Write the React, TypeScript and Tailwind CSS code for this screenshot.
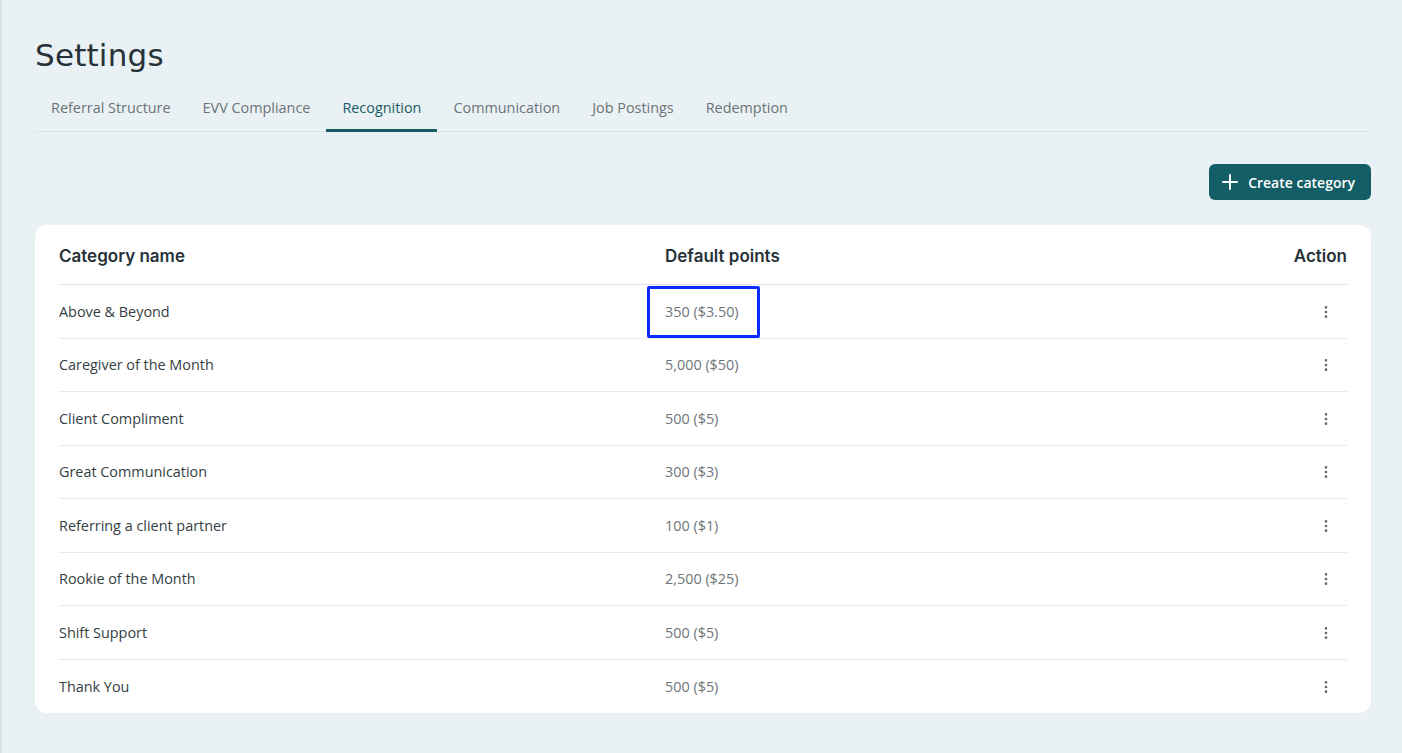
import { EllipsisVertical, Plus } from "lucide-react";

const tabs = [
  "Referral Structure",
  "EVV Compliance",
  "Recognition",
  "Communication",
  "Job Postings",
  "Redemption",
];

const categories = [
  { name: "Above & Beyond", points: "350 ($3.50)", highlight: true },
  { name: "Caregiver of the Month", points: "5,000 ($50)" },
  { name: "Client Compliment", points: "500 ($5)" },
  { name: "Great Communication", points: "300 ($3)" },
  { name: "Referring a client partner", points: "100 ($1)" },
  { name: "Rookie of the Month", points: "2,500 ($25)" },
  { name: "Shift Support", points: "500 ($5)" },
  { name: "Thank You", points: "500 ($5)" },
];

export default function App() {
  return (
    <main className="min-h-screen w-full border-l-2 border-[#d9e1e6] bg-[#eaf1f4] pt-[37px] pr-[31px] pb-10 pl-[33px] font-['Open_Sans',sans-serif]">
      <h1 className="font-['DejaVu_Sans',sans-serif] text-[31px] leading-9 font-normal tracking-[0.2px] text-[#263238]">
        Settings
      </h1>

      {/* tabs */}
      <nav className="mt-[15px] flex border-b border-[#dde4e8]">
        {tabs.map((t) => {
          const active = t === "Recognition";
          return (
            <button
              key={t}
              className={
                active
                  ? "-mb-px border-b-[3px] border-[#175c64] px-4 pt-[10px] pb-[11px] text-[14.4px] leading-5 text-[#175c64]"
                  : "-mb-px border-b-[3px] border-transparent px-4 pt-[10px] pb-[11px] text-[14.4px] leading-5 text-[#6b7479]"
              }
            >
              {t}
            </button>
          );
        })}
      </nav>

      <div className="mt-8 flex justify-end">
        <button className="flex h-9 items-center gap-1.5 rounded-md bg-[#135e66] pr-4 pl-[9px] text-[14px] font-semibold text-white">
          <Plus size={24} strokeWidth={2} />
          <span>Create category</span>
        </button>
      </div>

      {/* table card */}
      <section className="mt-[25px] rounded-xl bg-white px-6">
        <div className="grid h-[60px] grid-cols-[606px_1fr_auto] items-center border-b border-[#dbe2e7] pt-1 font-['Inter',sans-serif] text-[17px] font-semibold text-[#273238]">
          <div>Category name</div>
          <div>Default points</div>
          <div className="text-right">Action</div>
        </div>

        {categories.map((c, i) => (
          <div
            key={c.name}
            className={
              i === categories.length - 1
                ? "grid h-[53.5px] grid-cols-[606px_1fr_auto] items-center pt-px text-[14.4px]"
                : "grid h-[53.5px] grid-cols-[606px_1fr_auto] items-center border-b border-[#e7ebee] pt-px text-[14.4px]"
            }
          >
            <div className="text-[#343e43]">{c.name}</div>
            <div className="relative text-[#6d7579]">
              {c.highlight ? (
                <span className="absolute top-[-15px] left-[-18px] h-[52px] w-[113px] rounded-[2px] border-[3px] border-[#0a2bff]" />
              ) : null}
              {c.points}
            </div>
            <div className="flex justify-end">
              <button className="mr-[5px] flex h-8 w-8 items-center justify-center text-[#5f686c]">
                <EllipsisVertical size={16} strokeWidth={2} />
              </button>
            </div>
          </div>
        ))}
      </section>
    </main>
  );
}
